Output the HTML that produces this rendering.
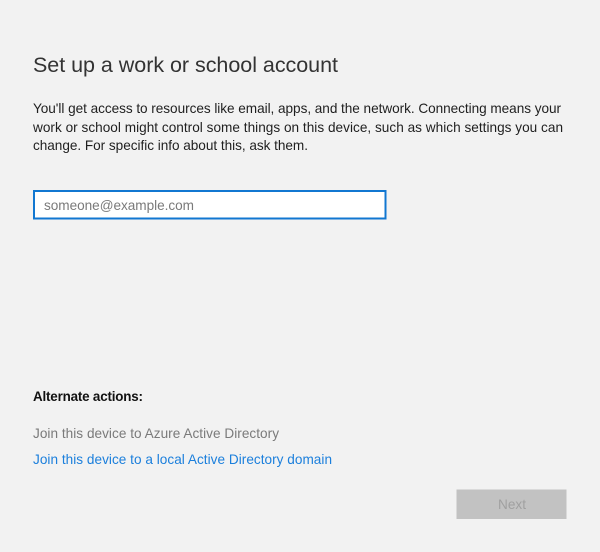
<!DOCTYPE html>
<html><head><meta charset="utf-8"><style>
html,body{margin:0;padding:0;width:600px;height:552px;background:#f2f2f2;overflow:hidden}
svg{position:absolute;left:0;top:0}
text{font-family:"Liberation Sans",sans-serif;font-size:13.6px;fill:#1f1f1f;filter:blur(.25px)}
</style></head><body>
<svg width="600" height="552" viewBox="0 0 600 552">
<rect width="600" height="552" fill="#f2f2f2"/>
<text x="33" y="72" style="font-size:21.5px;fill:#333" textLength="305" lengthAdjust="spacing">Set up a work or school account</text>
<text x="33" y="113" textLength="528" lengthAdjust="spacing">You'll get access to resources like email, apps, and the network. Connecting means your</text>
<text x="33" y="132" textLength="530" lengthAdjust="spacing">work or school might control some things on this device, such as which settings you can</text>
<text x="33" y="150" textLength="275" lengthAdjust="spacing">change. For specific info about this, ask them.</text>
<rect x="34" y="191" width="351.5" height="27.5" fill="#fff" stroke="#1177d1" stroke-width="2"/>
<text x="44" y="210" style="fill:#7a7a7a" textLength="150" lengthAdjust="spacing">someone@example.com</text>
<text x="33" y="401" style="font-weight:bold;font-size:13.4px;fill:#111" textLength="110" lengthAdjust="spacing">Alternate actions:</text>
<text x="33" y="438" style="fill:#7a7a7a" textLength="246" lengthAdjust="spacing">Join this device to Azure Active Directory</text>
<text x="33" y="464" style="fill:#1b7fdc" textLength="299" lengthAdjust="spacing">Join this device to a local Active Directory domain</text>
<rect x="456.5" y="489.5" width="110" height="29.5" fill="#c2c2c2"/>
<text x="498" y="509" style="fill:#a0a0a0" textLength="28" lengthAdjust="spacing">Next</text>
</svg>
</body></html>
